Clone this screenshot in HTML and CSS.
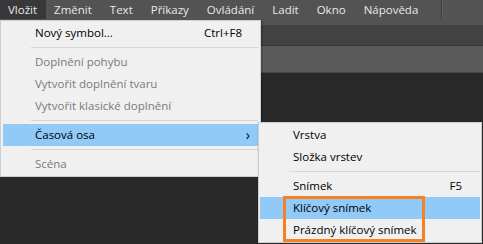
FILE: index.html
```html
<!DOCTYPE html>
<html lang="cs">
<head>
<meta charset="utf-8">
<title>Vložit menu</title>
<link rel="stylesheet" href="styles.css">
</head>
<body>
<div class="app">
  <div class="menubar">
    <div class="mb-item active">Vložit</div>
    <div class="mb-item">Změnit</div>
    <div class="mb-item">Text</div>
    <div class="mb-item">Příkazy</div>
    <div class="mb-item">Ovládání</div>
    <div class="mb-item">Ladit</div>
    <div class="mb-item">Okno</div>
    <div class="mb-item">Nápověda</div>
    <div class="mb-sep"></div>
  </div>
  <div class="toolbar"></div>
  <div class="panel"></div>

  <div class="menu main-menu">
    <div class="item"><span>Nový symbol...</span><span class="key">Ctrl+F8</span></div>
    <div class="sep"></div>
    <div class="item disabled"><span>Doplnění pohybu</span></div>
    <div class="item disabled"><span>Vytvořit doplnění tvaru</span></div>
    <div class="item disabled"><span>Vytvořit klasické doplnění</span></div>
    <div class="sep"></div>
    <div class="item hot"><span>Časová osa</span><span class="arrow">&#8250;</span></div>
    <div class="sep"></div>
    <div class="item disabled"><span>Scéna</span></div>
  </div>

  <div class="menu sub-menu">
    <div class="item"><span>Vrstva</span></div>
    <div class="item"><span>Složka vrstev</span></div>
    <div class="sep"></div>
    <div class="item"><span>Snímek</span><span class="key">F5</span></div>
    <div class="item hot"><span>Klíčový snímek</span></div>
    <div class="item"><span>Prázdný klíčový snímek</span></div>
    <div class="mark"></div>
  </div>
</div>
</body>
</html>
```

FILE: styles.css
```css
* { box-sizing: border-box; }
html, body { margin: 0; padding: 0; }
body {
  background: #282828;
  font-family: "Open Sans", "Noto Sans", sans-serif;
  font-size: 11.5px;
  width: 483px;
  height: 244px;
  overflow: hidden;
}
.app { position: relative; width: 483px; height: 244px; }

.menubar {
  height: 25px;
  background: #535353;
  display: flex;
  align-items: flex-start;
}
.mb-item {
  height: 19px;
  line-height: 19px;
  padding: 0 10px 0 8px;
  color: #e8e8e8;
  white-space: nowrap;
}
.mb-item.active { background: #383838; padding-right: 9px; }
.mb-sep {
  margin-left: 13px;
  width: 2px;
  height: 19px;
  border-left: 1px solid #3e3e3e;
  border-right: 1px solid #5f5f5f;
}
.toolbar {
  height: 21px;
  background: #424242;
  border-bottom: 1px solid #363636;
}
.panel {
  height: 27px;
  background: #5a5a5a;
  border-bottom: 1px solid #474747;
}

.menu {
  position: absolute;
  background: #f0f0f0;
  border: 1px solid #cfcfcf;
  padding: 1px 2px;
  color: #000;
}
.main-menu {
  left: 0;
  top: 20px;
  width: 261px;
  padding-top: 1px;
  box-shadow: 2px 0 0 rgba(0,0,0,0.15);
}
.sub-menu {
  left: 258px;
  top: 122px;
  width: 224px;
  padding: 1px 1px;
  box-shadow: -1px 0 0 rgba(0,0,0,0.06);
}
.item {
  height: 22px;
  line-height: 22px;
  padding: 0 16px 0 32px;
  display: flex;
  justify-content: space-between;
  white-space: nowrap;
}
.sub-menu .item { padding-left: 33px; padding-right: 18px; }
.item.disabled { color: #7a7a7a; }
.item.hot { background: #91c9f7; }
.arrow { font-size: 14px; margin-right: -8px; }
.sep {
  height: 1px;
  background: #d7d7d7;
  margin: 3px 0 3px 28px;
}
.sub-menu .sep { margin-left: 29px; }

.mark {
  position: absolute;
  left: 24px;
  top: 73px;
  width: 142px;
  height: 46px;
  border: 3px solid #f58025;
}
```
